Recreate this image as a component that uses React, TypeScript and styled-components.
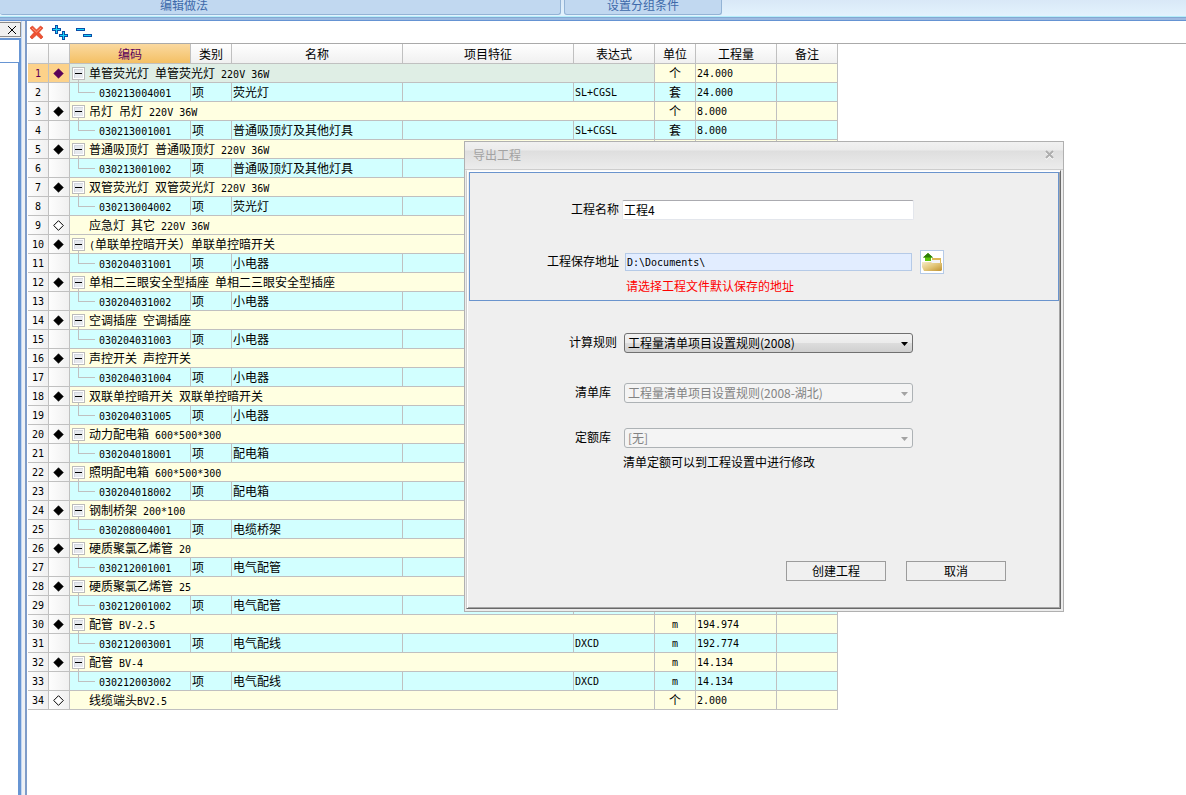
import React from "react";
import styled, { createGlobalStyle, css } from "styled-components";

const GlobalStyle = createGlobalStyle`
  *, *::before, *::after { box-sizing: border-box; }
  body {
    margin: 0;
    background: #fff;
    color: #000;
    font-family: "Noto Sans CJK SC", sans-serif;
    font-size: 12px;
    line-height: 16px;
  }
  button, input, select { font: inherit; color: inherit; margin: 0; padding: 0; }
`;

const Page = styled.div`
  position: relative;
  display: flex;
  flex-direction: column;
  min-height: 100vh;
  overflow: hidden;
`;

/* Ribbon */

const Ribbon = styled.header`
  display: flex;
  gap: 3px;
  height: 21px;
  padding-bottom: 6px;
  background: linear-gradient(
    #d9e8f7 0, #e3f3fd 16px,
    #b4eefb 16px, #b4eefb 17px,
    #84a9d2 17px, #84a9d2 18px,
    #9dbae1 18px, #9dbae1 20px,
    #6593d3 20px
  );
`;

const RibbonGroup = styled.div<{ $wide?: boolean }>`
  width: ${(p) => (p.$wide ? "561px" : "158px")};
  padding-left: ${(p) => (p.$wide ? "160px" : "42px")};
  border: 1px solid #93b3d5;
  border-top: 0;
  border-left-width: ${(p) => (p.$wide ? "0" : "1px")};
  border-radius: 0 0 3px 3px;
  background: #c1d8f0;
  color: #3e6aaa;
  line-height: 10px;
  white-space: nowrap;
`;

/* Workspace */

const Workspace = styled.div`
  display: flex;
  flex: 1;
`;

const SidePanel = styled.aside`
  display: flex;
  flex-direction: column;
  width: 21px;
  padding-top: 1px;
  background: #f0f0f0;
`;

const SideClose = styled.button`
  display: flex;
  align-items: center;
  justify-content: center;
  width: 21px;
  height: 15px;
  padding-left: 3px;
  border: 1px solid #8c8c8c;
  border-left: 0;
  background: #f0f0f0;
`;

const SideField = styled.div`
  height: 25px;
  margin-top: 1px;
  border: solid #6795d3;
  border-width: 2px 2px 1px 0;
  background: #fff;
`;

const SideBody = styled.div`
  flex: 1;
  border-right: 3px solid #6795d3;
  background: #fff;
`;

const Splitter = styled.div`
  width: 6px;
  border-left: 1px solid #c3d6f0;
  border-right: 2px solid #7f9cc8;
  background: #eef1f5;
`;

const Main = styled.main`
  flex: 1;
  min-width: 0;
`;

const Toolbar = styled.div`
  display: flex;
  align-items: center;
  gap: 8px;
  height: 23px;
  padding-left: 2px;
  border-bottom: 1px solid #aaa;
`;

const ToolButton = styled.button`
  display: flex;
  border: 0;
  background: none;
`;

/* Grid */

const line = "1px solid #c0c0c0";

const Sheet = styled.table`
  width: 810px;
  margin-left: 1px;
  table-layout: fixed;
  border-collapse: separate;
  border-spacing: 0;
`;

const HeadCell = styled.th<{ $active?: boolean }>`
  height: 20px;
  padding: 0;
  border-right: ${line};
  border-bottom: ${line};
  font-weight: 400;
  background: ${(p) => (p.$active ? "linear-gradient(#fad9a0, #f4c064)" : "linear-gradient(#fff, #f0f0f0)")};
  color: ${(p) => (p.$active ? "#5b0059" : "#000")};
`;

const RowHead = styled.th<{ $active?: boolean }>`
  height: 19px;
  padding: 0;
  border-right: ${line};
  border-bottom: ${line};
  font-weight: 400;
  background: ${(p) => (p.$active ? "#fdd28a" : "linear-gradient(90deg, #fdfdfd, #f0f0f0)")};
  color: ${(p) => (p.$active ? "#5b0059" : "#000")};
  svg { display: block; margin: 0 0 0 4px; }
`;

type Tone = "group" | "item" | "current";
const tones: Record<Tone, string> = { group: "#ffffe1", item: "#d2ffff", current: "#dfeee5" };

const Cell = styled.td<{ $tone: Tone; $center?: boolean }>`
  height: 19px;
  padding: 0 0 0 1px;
  border-right: ${line};
  border-bottom: ${line};
  background: ${(p) => tones[p.$tone]};
  white-space: nowrap;
  overflow: hidden;
  ${(p) => p.$center && css`padding: 0; text-align: center;`}
`;

const TreeCell = styled(Cell)`
  padding: 0;
`;

const TreeLine = styled.div<{ $leaf?: boolean }>`
  display: flex;
  align-items: center;
  gap: 4px;
  height: 18px;
  padding-left: ${(p) => (p.$leaf ? "19px" : "2px")};
`;

const TreeText = styled.span`
  padding-top: 2px;
`;

const Toggle = styled.button`
  display: flex;
  align-self: flex-end;
  border: 0;
  background: none;
`;

const Elbow = styled.span`
  align-self: flex-start;
  width: 17px;
  height: 10px;
  margin-left: 6px;
  border: solid #c0c0c0;
  border-width: 0 0 1px 1px;
`;

const Latin = styled.span`
  font-family: "DejaVu Sans Mono", monospace;
  font-size: 10px;
  white-space: pre;
`;

/* Dialog */

const Dialog = styled.section`
  position: absolute;
  top: 141px;
  left: 464px;
  width: 600px;
  border: 1px solid #b0b0b0;
  background: #ececec;
`;

const TitleBar = styled.div`
  display: flex;
  align-items: center;
  justify-content: space-between;
  height: 28px;
  padding: 0 8px 2px;
  border-bottom: 1px solid #cdcdcd;
  background: linear-gradient(#f1f1f1 0, #ebebeb 8px, #dedede 9px, #ececec 100%);
`;

const Title = styled.h1`
  margin: 0;
  font-size: 12px;
  line-height: 16px;
  font-weight: 400;
  color: #a3a3a3;
`;

const CloseButton = styled.button`
  display: flex;
  border: 0;
  background: none;
`;

const DialogBody = styled.form`
  margin: 0 2px 2px 1px;
  padding: 1px 1px 27px 2px;
  border: 1px solid;
  border-color: #fafafa #696969 #696969 #cdcdcd;
  box-shadow: inset 1px 1px #fff, inset -1px -1px #a5a5a5;
  background: #efefef;
`;

const ProjectBox = styled.div`
  padding: 27px 0 6px;
  border: 1px solid #6a94cd;
`;

const Field = styled.div<{ $gap?: number }>`
  display: flex;
  align-items: center;
  margin-top: ${(p) => p.$gap ?? 0}px;
`;

const Label = styled.label`
  width: 149px;
  padding-bottom: 2px;
  text-align: right;
`;

const RuleLabel = styled.label`
  width: 54px;
  margin: 0 4px 0 97px;
  padding-bottom: 2px;
  text-align: center;
`;

const NameInput = styled.input`
  width: 292px;
  height: 20px;
  margin-left: 3px;
  padding: 0 0 2px 1px;
  border: 1px solid #e3e6ec;
  border-top-color: #ababb0;
  border-radius: 2px;
  background: #fff;
`;

const PathInput = styled.input`
  width: 287px;
  height: 18px;
  margin: 0 8px 0 6px;
  padding-left: 1px;
  border: 1px solid #b5cae7;
  background: #e2edff;
  font-family: "DejaVu Sans Mono", monospace;
  font-size: 10px;
`;

const BrowseButton = styled.button`
  display: flex;
  align-items: center;
  justify-content: center;
  width: 24px;
  height: 24px;
  border: 1px solid #b5cae7;
  background: #fff;
`;

const Hint = styled.p`
  margin: 4px 0 0 156px;
  color: #f00;
`;

const Note = styled.p`
  margin: 6px 0 91px 154px;
`;

const SelectWrap = styled.div`
  position: relative;
  width: 289px;
`;

const Select = styled.select`
  display: block;
  appearance: none;
  width: 100%;
  height: 20px;
  padding-left: 3px;
  border: 1px solid #707070;
  border-radius: 3px;
  background: linear-gradient(#f2f2f2 0, #ebebeb 50%, #dddddd 50%, #cfcfcf 100%);
  &:disabled {
    opacity: 1;
    border-color: #adb2b5;
    background: #f4f4f4;
    color: #838383;
  }
`;

const Arrow = styled.svg`
  position: absolute;
  top: 9px;
  right: 5px;
  pointer-events: none;
`;

const Actions = styled.div`
  display: flex;
  justify-content: flex-end;
  gap: 20px;
  padding-right: 53px;
`;

const ActionButton = styled.button`
  width: 100px;
  height: 20px;
  border: 1px solid #9c9c9c;
  background: #f0f0f0;
  line-height: 16px;
`;

/* Sets ASCII runs in the half-width face beside full-width Chinese. */
function Mixed({ children }: { children: string }) {
  return (
    <>
      {children.split(/([\x20-\x7e]+)/).filter(Boolean).map((part, i) =>
        /^[\x20-\x7e]/.test(part) ? <Latin key={i}>{part}</Latin> : part
      )}
    </>
  );
}

const Diamond = ({ open, color = "#000" }: { open?: boolean; color?: string }) => (
  <svg width="11" height="11" viewBox="0 0 11 11">
    <path d="M5.5 .7 10.3 5.5 5.5 10.3 .7 5.5Z" fill={open ? "#fff" : color} stroke={color} strokeWidth={open ? 1 : 0.6} />
  </svg>
);

const CollapseIcon = () => (
  <svg width="13" height="15" viewBox="0 0 13 15" shapeRendering="crispEdges">
    <rect x=".5" y=".5" width="12" height="12" fill="#fff" stroke="#bcbcbc" />
    <rect x="2" y="2" width="9" height="9" fill="#d3d7df" />
    <rect x="3" y="3" width="8" height="8" fill="#e6e9ee" />
    <path d="M3 6.5H10" stroke="#000" />
    <path d="M6.5 13V15" stroke="#c0c0c0" />
  </svg>
);

const SelectArrow = ({ muted }: { muted?: boolean }) => (
  <Arrow width="7" height="4" viewBox="0 0 7 4">
    <path d="M0 0H7L3.5 4Z" fill={muted ? "#a3a3a3" : "#000"} />
  </Arrow>
);

const columns: [string, number][] = [
  ["", 21], ["", 21], ["编码", 121], ["类别", 41], ["名称", 171], ["项目特征", 171],
  ["表达式", 81], ["单位", 41], ["工程量", 81], ["备注", 61],
];

type Row = { title?: string; leaf?: boolean; code?: string; name?: string; expr?: string; unit?: string; qty?: string };

const rows: Row[] = [
  { title: "单管荧光灯 单管荧光灯 220V 36W", unit: "个", qty: "24.000" },
  { code: "030213004001", name: "荧光灯", expr: "SL+CGSL", unit: "套", qty: "24.000" },
  { title: "吊灯 吊灯 220V 36W", unit: "个", qty: "8.000" },
  { code: "030213001001", name: "普通吸顶灯及其他灯具", expr: "SL+CGSL", unit: "套", qty: "8.000" },
  { title: "普通吸顶灯 普通吸顶灯 220V 36W" },
  { code: "030213001002", name: "普通吸顶灯及其他灯具" },
  { title: "双管荧光灯 双管荧光灯 220V 36W" },
  { code: "030213004002", name: "荧光灯" },
  { title: "应急灯 其它 220V 36W", leaf: true },
  { title: "(单联单控暗开关）单联单控暗开关" },
  { code: "030204031001", name: "小电器" },
  { title: "单相二三眼安全型插座 单相二三眼安全型插座" },
  { code: "030204031002", name: "小电器" },
  { title: "空调插座 空调插座" },
  { code: "030204031003", name: "小电器" },
  { title: "声控开关 声控开关" },
  { code: "030204031004", name: "小电器" },
  { title: "双联单控暗开关 双联单控暗开关" },
  { code: "030204031005", name: "小电器" },
  { title: "动力配电箱 600*500*300" },
  { code: "030204018001", name: "配电箱" },
  { title: "照明配电箱 600*500*300" },
  { code: "030204018002", name: "配电箱" },
  { title: "钢制桥架 200*100" },
  { code: "030208004001", name: "电缆桥架" },
  { title: "硬质聚氯乙烯管 20" },
  { code: "030212001001", name: "电气配管" },
  { title: "硬质聚氯乙烯管 25" },
  { code: "030212001002", name: "电气配管" },
  { title: "配管 BV-2.5", unit: "m", qty: "194.974" },
  { code: "030212003001", name: "电气配线", expr: "DXCD", unit: "m", qty: "192.774" },
  { title: "配管 BV-4", unit: "m", qty: "14.134" },
  { code: "030212003002", name: "电气配线", expr: "DXCD", unit: "m", qty: "14.134" },
  { title: "线缆端头BV2.5", leaf: true, unit: "个", qty: "2.000" },
];

function SheetRow({ row, index }: { row: Row; index: number }) {
  const current = index === 0;
  const tone: Tone = row.title ? "group" : "item";
  return (
    <tr>
      <RowHead scope="row" $active={current}><Latin>{String(index + 1)}</Latin></RowHead>
      <RowHead as="td" $active={current}>
        {row.title && <Diamond open={row.leaf} color={current ? "#5b0059" : "#000"} />}
      </RowHead>
      {row.title ? (
        <TreeCell $tone={current ? "current" : "group"} colSpan={5}>
          <TreeLine $leaf={row.leaf}>
            {!row.leaf && <Toggle type="button"><CollapseIcon /></Toggle>}
            <TreeText><Mixed>{row.title}</Mixed></TreeText>
          </TreeLine>
        </TreeCell>
      ) : (
        <>
          <TreeCell $tone="item">
            <TreeLine><Elbow /><TreeText><Latin>{row.code}</Latin></TreeText></TreeLine>
          </TreeCell>
          <Cell $tone="item">项</Cell>
          <Cell $tone="item">{row.name}</Cell>
          <Cell $tone="item" />
          <Cell $tone="item"><Latin>{row.expr}</Latin></Cell>
        </>
      )}
      <Cell $tone={tone} $center><Mixed>{row.unit ?? ""}</Mixed></Cell>
      <Cell $tone={tone}><Latin>{row.qty}</Latin></Cell>
      <Cell $tone={tone} />
    </tr>
  );
}

function ExportDialog() {
  return (
    <Dialog role="dialog" aria-labelledby="dialog-title">
      <TitleBar>
        <Title id="dialog-title">导出工程</Title>
        <CloseButton type="button">
          <svg width="11" height="10" viewBox="0 0 11 10">
            <path d="M2 2 9 9M9 2 2 9" stroke="#fff" strokeWidth="2" />
            <path d="M2 1 9 8M9 1 2 8" stroke="#adadad" strokeWidth="2" />
          </svg>
        </CloseButton>
      </TitleBar>
      <DialogBody onSubmit={(e) => e.preventDefault()}>
        <ProjectBox>
          <Field>
            <Label htmlFor="name">工程名称</Label>
            <NameInput id="name" defaultValue="工程4" />
          </Field>
          <Field $gap={30}>
            <Label htmlFor="path">工程保存地址</Label>
            <PathInput id="path" readOnly value={"D:\\Documents\\"} />
            <BrowseButton type="button">
              <svg width="22" height="20" viewBox="0 0 22 20">
                <defs>
                  <linearGradient id="folder" x1="0" y1="0" x2="1" y2="1">
                    <stop offset="0" stopColor="#f6ecca" />
                    <stop offset=".5" stopColor="#e2c67a" />
                    <stop offset="1" stopColor="#bf9231" />
                  </linearGradient>
                </defs>
                <path d="M11 6H20V13H11Z" fill="#dcb857" />
                <path d="M10 8H19V12H8Z" fill="#f2f3f8" />
                <path d="M1 10H10L11 11H21V18L20 19H3L1 15Z" fill="url(#folder)" />
                <path d="M7 1 12 5.5H10V9H4V5.5H2Z" fill="#5cc40a" />
                <path d="M7 1 12 5.5H2Z" fill="#2f7d08" />
              </svg>
            </BrowseButton>
          </Field>
          <Hint>请选择工程文件默认保存的地址</Hint>
        </ProjectBox>
        <Field $gap={32}>
          <RuleLabel htmlFor="rule">计算规则</RuleLabel>
          <SelectWrap>
            <Select id="rule"><option>工程量清单项目设置规则(2008)</option></Select>
            <SelectArrow />
          </SelectWrap>
        </Field>
        <Field $gap={30}>
          <RuleLabel htmlFor="list">清单库</RuleLabel>
          <SelectWrap>
            <Select id="list" disabled><option>工程量清单项目设置规则(2008-湖北)</option></Select>
            <SelectArrow muted />
          </SelectWrap>
        </Field>
        <Field $gap={25}>
          <RuleLabel htmlFor="quota">定额库</RuleLabel>
          <SelectWrap>
            <Select id="quota" disabled><option>[无]</option></Select>
            <SelectArrow muted />
          </SelectWrap>
        </Field>
        <Note>清单定额可以到工程设置中进行修改</Note>
        <Actions>
          <ActionButton type="submit">创建工程</ActionButton>
          <ActionButton type="button">取消</ActionButton>
        </Actions>
      </DialogBody>
    </Dialog>
  );
}

export default function App() {
  return (
    <Page>
      <GlobalStyle />
      <Ribbon>
        <RibbonGroup $wide>编辑做法</RibbonGroup>
        <RibbonGroup>设置分组条件</RibbonGroup>
      </Ribbon>
      <Workspace>
        <SidePanel>
          <SideClose type="button" aria-label="关闭">
            <svg width="8" height="8" viewBox="0 0 8 8">
              <path d="M0 0 8 8M8 0 0 8" stroke="#000" />
            </svg>
          </SideClose>
          <SideField />
          <SideBody />
        </SidePanel>
        <Splitter />
        <Main>
          <Toolbar>
            <ToolButton type="button" aria-label="删除">
              <svg width="15" height="15" viewBox="0 0 15 15">
                <path d="M1 3 3.5 1 7.5 5 11.5 1 14 3 10 7.5 14 12 12 14 7.5 10 3 14 1 12 5 7.5Z" fill="#ee5132" stroke="#d9482c" strokeWidth=".7" />
                <path d="M3 3 7.5 7 12 3" fill="none" stroke="#ff9c80" />
              </svg>
            </ToolButton>
            <ToolButton type="button" aria-label="全部展开">
              <svg width="16" height="15" viewBox="0 0 16 15" shapeRendering="crispEdges">
                <path d="M3 0H6V3H9V6H6V9H3V6H0V3H3Z M10 6H13V9H16V12H13V15H10V12H7V9H10Z" fill="#0a4ea8" />
                <path d="M4 1H5V4H8V5H5V8H4V5H1V4H4Z M11 7H12V10H15V11H12V14H11V11H8V10H11Z" fill="#18d4f8" />
              </svg>
            </ToolButton>
            <ToolButton type="button" aria-label="全部折叠">
              <svg width="16" height="9" viewBox="0 0 16 9" shapeRendering="crispEdges">
                <path d="M0 0H9V3H0Z M7 6H16V9H7Z" fill="#0a4ea8" />
                <path d="M1 1H8V2H1Z M8 7H15V8H8Z" fill="#18d4f8" />
              </svg>
            </ToolButton>
          </Toolbar>
          <Sheet>
            <colgroup>
              {columns.map(([, width], i) => <col key={i} width={width} />)}
            </colgroup>
            <thead>
              <tr>
                {columns.map(([name], i) => <HeadCell key={i} $active={i === 2}>{name}</HeadCell>)}
              </tr>
            </thead>
            <tbody>
              {rows.map((row, i) => <SheetRow key={i} row={row} index={i} />)}
            </tbody>
          </Sheet>
        </Main>
      </Workspace>
      <ExportDialog />
    </Page>
  );
}
